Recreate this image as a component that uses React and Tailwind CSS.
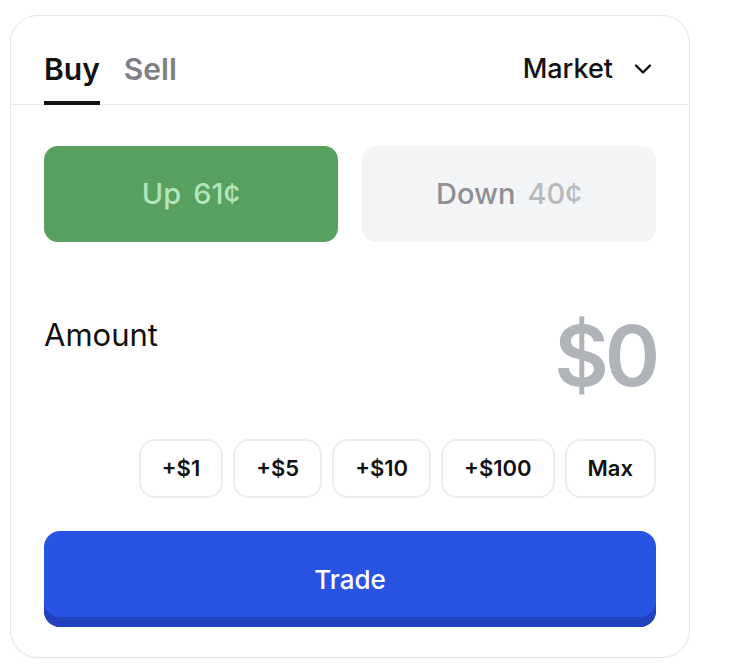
import React, { useState } from 'react';
import { ChevronDown } from 'lucide-react';

const quickAmounts = ['+$1', '+$5', '+$10', '+$100', 'Max'];

const App = () => {
  const [tab, setTab] = useState('buy');
  const [side, setSide] = useState('up');

  return (
    <div className="min-h-screen bg-white pt-[15px] pl-[10px] font-['Inter',_'Liberation_Sans',_sans-serif]">
      <div className="w-[680px] h-[643px] rounded-[28px] border border-[#e6e6e6] bg-white px-[33px] shadow-[0_1px_3px_rgba(0,0,0,0.04)]">
        {/* tabs + order type */}
        <div className="flex items-start justify-between border-b border-[#e8e8e8] -mx-[33px] px-[33px]">
          <div className="flex gap-6">
            <button
              onClick={() => setTab('buy')}
              className={`pt-[35px] pb-[14px] -mb-px text-[30px] leading-9 font-semibold border-b-4 ${tab === 'buy' ? 'text-[#111] border-[#111]' : 'text-[#7f8084] border-transparent'}`}
            >
              Buy
            </button>
            <button
              onClick={() => setTab('sell')}
              className={`pt-[35px] pb-[14px] -mb-px text-[30px] leading-9 font-semibold border-b-4 ${tab === 'sell' ? 'text-[#111] border-[#111]' : 'text-[#7f8084] border-transparent'}`}
            >
              Sell
            </button>
          </div>
          <button className="flex items-center gap-[16px] pt-[35px] text-[27px] leading-9 font-medium text-[#111]">
            Market
            <ChevronDown size={28} strokeWidth={2} className="-mr-[1px]" />
          </button>
        </div>

        {/* outcome selector */}
        <div className="grid grid-cols-2 gap-6 mt-[41px]">
          <button
            onClick={() => setSide('up')}
            className="h-[96px] rounded-[14px] bg-[#58a05f] flex items-center justify-center gap-3 text-[29px] font-medium text-[#b3e4ba]"
          >
            <span>Up</span>
            <span>61¢</span>
          </button>
          <button
            onClick={() => setSide('down')}
            className="h-[96px] rounded-[14px] bg-[#f3f4f6] flex items-center justify-center gap-3 text-[29px] font-medium"
          >
            <span className="text-[#8e8f93]">Down</span>
            <span className="text-[#b8b9bd]">40¢</span>
          </button>
        </div>

        {/* amount */}
        <div className="flex items-start justify-between mt-[72px]">
          <div className="mt-[3px] text-[31px] leading-9 font-normal text-[#111]">Amount</div>
          <div className="text-[84px] leading-[84px] font-semibold tracking-[-0.05em] text-[#b0b4b9]">$0</div>
        </div>

        <div className="flex justify-end gap-[10px] mt-[41px]">
          {quickAmounts.map((a) => (
            <button
              key={a}
              className="h-[59px] px-[21px] rounded-[16px] border-2 border-[#ededed] bg-white text-[22px] font-semibold text-[#111]"
            >
              {a}
            </button>
          ))}
        </div>

        <button className="mt-[33px] w-full h-[96px] rounded-[16px] bg-[#2853e3] shadow-[inset_0_-10px_0_#2342c0] text-[26px] font-medium text-white">
          Trade
        </button>
      </div>
    </div>
  );
};

export default App;
